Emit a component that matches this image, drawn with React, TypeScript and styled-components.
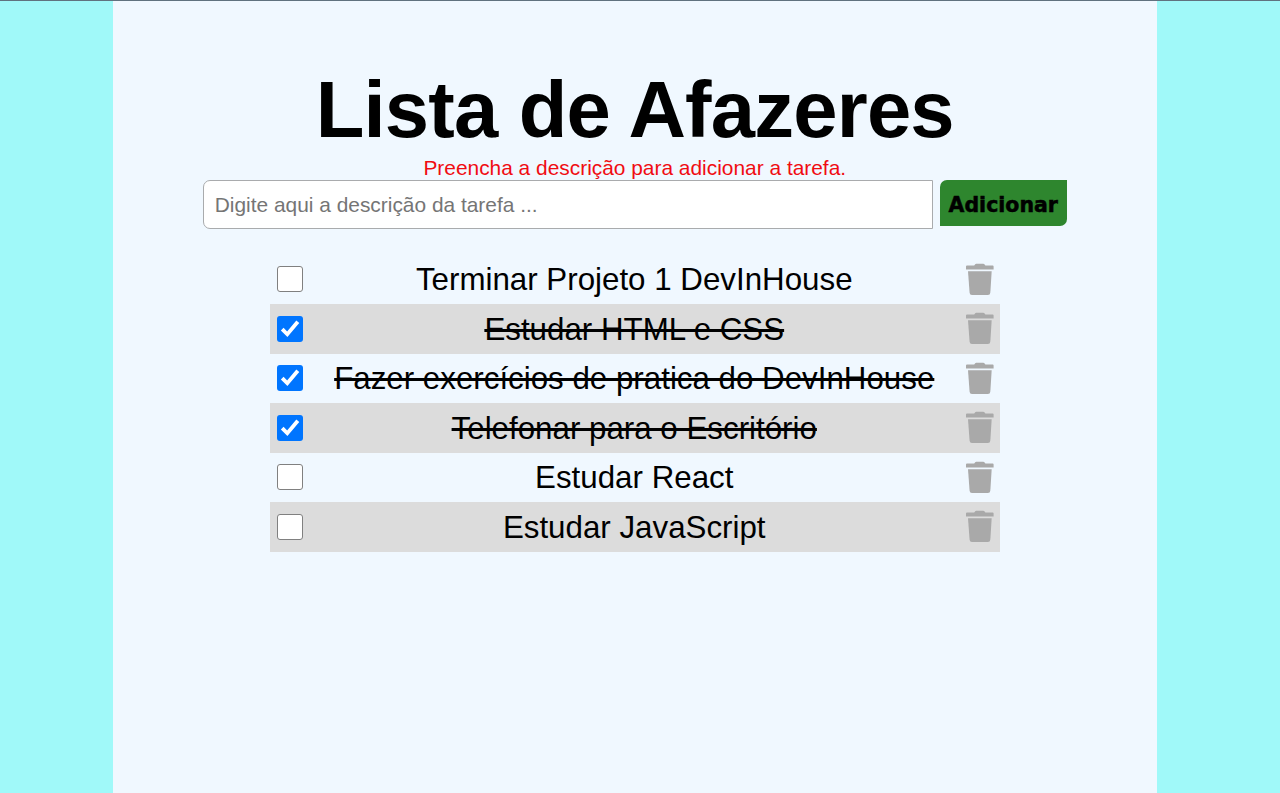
import { useState } from "react";
import styled, { createGlobalStyle } from "styled-components";

const GlobalStyle = createGlobalStyle`
  * { box-sizing: border-box; }
  body {
    margin: 0;
    background: #a0f9f9;
    font-family: "Liberation Sans", Arial, sans-serif;
    color: #000;
  }
`;

const Page = styled.div`
  height: 100vh;
  overflow: hidden;
  border-top: 1px solid #60727f;
  padding: 0 123.5px 0 113px;
`;

const Panel = styled.main`
  height: 100%;
  background: #f0f8ff;
  display: flex;
  flex-direction: column;
  align-items: center;
`;

const Title = styled.h1`
  margin: 63px 0 0;
  font-size: 79.6px;
  letter-spacing: -0.8px;
  line-height: 91px;
  white-space: nowrap;
`;

const Warning = styled.p`
  margin: 0;
  height: 25px;
  line-height: 26px;
  font-size: 20.9px;
  color: #f00c12;
`;

const Form = styled.form`
  width: 864px;
  display: flex;
  align-items: flex-start;
  gap: 7px;
`;

const Field = styled.input`
  width: 730px;
  height: 49px;
  padding: 0 11px;
  border: 1px solid #a9abad;
  border-radius: 7px 0 0 7px;
  background: #fff;
  font: 20.9px "Liberation Sans", Arial, sans-serif;
  &::placeholder { color: #757575; }
`;

const AddButton = styled.button`
  width: 127px;
  height: 46px;
  padding: 3px 0 0;
  border: 0;
  border-radius: 7px 0 7px 0;
  background: #2e862e;
  color: #000;
  font: 700 20.5px "DejaVu Sans", sans-serif;
  -webkit-text-stroke: 0.5px #000;
`;

const List = styled.ul`
  width: 730px;
  margin: 25.5px 0 0;
  padding: 0;
  list-style: none;
`;

const Item = styled.li`
  display: flex;
  align-items: center;
  height: 49.5px;
  padding: 0 6px 0 7px;
  &:nth-child(even) { background: #dcdcdc; }
`;

const CheckBox = styled.button<{ $checked: boolean }>`
  display: grid;
  flex: none;
  width: 26px;
  height: 26px;
  padding: 0;
  border: ${(p) => (p.$checked ? "0" : "1.5px solid #808080")};
  border-radius: 3px;
  background: ${(p) => (p.$checked ? "#0075ff" : "#fff")};
`;

const Description = styled.span<{ $done: boolean }>`
  flex: 1;
  padding-top: 1.5px;
  text-align: center;
  font-size: 31.3px;
  white-space: nowrap;
  text-decoration: ${(p) => (p.$done ? "line-through" : "none")};
`;

const RemoveButton = styled.button`
  display: flex;
  padding: 0;
  border: 0;
  background: none;
  color: #a9a9a9;
`;

const Tick = () => (
  <svg width="26" height="26" viewBox="0 0 26 26" fill="none" stroke="#fff" strokeWidth="3.8" aria-hidden="true">
    <path d="M5.2 13.2L10.3 18.3L20.8 5.8" />
  </svg>
);

const TrashIcon = () => (
  <svg width="28" height="33" viewBox="0 0 28 33" fill="currentColor" aria-hidden="true">
    <path d="M1 2.6H8.2L9.2 1.3Q9.6 .8 10.2 .8H17.4Q18 .8 18.4 1.3L19.4 2.6H26.6Q27.6 2.6 27.6 3.6V6.4H0V3.6Q0 2.6 1 2.6Z" />
    <path d="M2 8.2H25.7L24.3 29.7Q24.1 31.9 21.9 31.9H6Q3.8 31.9 3.6 29.7Z" />
  </svg>
);

const initialTasks = [
  { text: "Terminar Projeto 1 DevInHouse", done: false },
  { text: "Estudar HTML e CSS", done: true },
  { text: "Fazer exercícios de pratica do DevInHouse", done: true },
  { text: "Telefonar para o Escritório", done: true },
  { text: "Estudar React", done: false },
  { text: "Estudar JavaScript", done: false },
];

export default function App() {
  const [tasks, setTasks] = useState(initialTasks);
  const [draft, setDraft] = useState("");
  const [showWarning, setShowWarning] = useState(true);

  const add = (event: React.FormEvent) => {
    event.preventDefault();
    const text = draft.trim();
    setShowWarning(!text);
    if (!text) return;
    setTasks([...tasks, { text, done: false }]);
    setDraft("");
  };

  const toggle = (index: number) =>
    setTasks(tasks.map((t, i) => (i === index ? { ...t, done: !t.done } : t)));

  return (
    <>
      <GlobalStyle />
      <Page>
        <Panel>
          <Title>Lista de Afazeres</Title>
          <Warning>{showWarning && "Preencha a descrição para adicionar a tarefa."}</Warning>
          <Form onSubmit={add}>
            <Field
              value={draft}
              onChange={(e) => setDraft(e.target.value)}
              placeholder="Digite aqui a descrição da tarefa ..."
            />
            <AddButton type="submit">Adicionar</AddButton>
          </Form>
          <List>
            {tasks.map((task, index) => (
              <Item key={index}>
                <CheckBox
                  type="button"
                  role="checkbox"
                  aria-checked={task.done}
                  $checked={task.done}
                  onClick={() => toggle(index)}
                >
                  {task.done && <Tick />}
                </CheckBox>
                <Description $done={task.done}>{task.text}</Description>
                <RemoveButton
                  type="button"
                  aria-label="Remover"
                  onClick={() => setTasks(tasks.filter((_, i) => i !== index))}
                >
                  <TrashIcon />
                </RemoveButton>
              </Item>
            ))}
          </List>
        </Panel>
      </Page>
    </>
  );
}
